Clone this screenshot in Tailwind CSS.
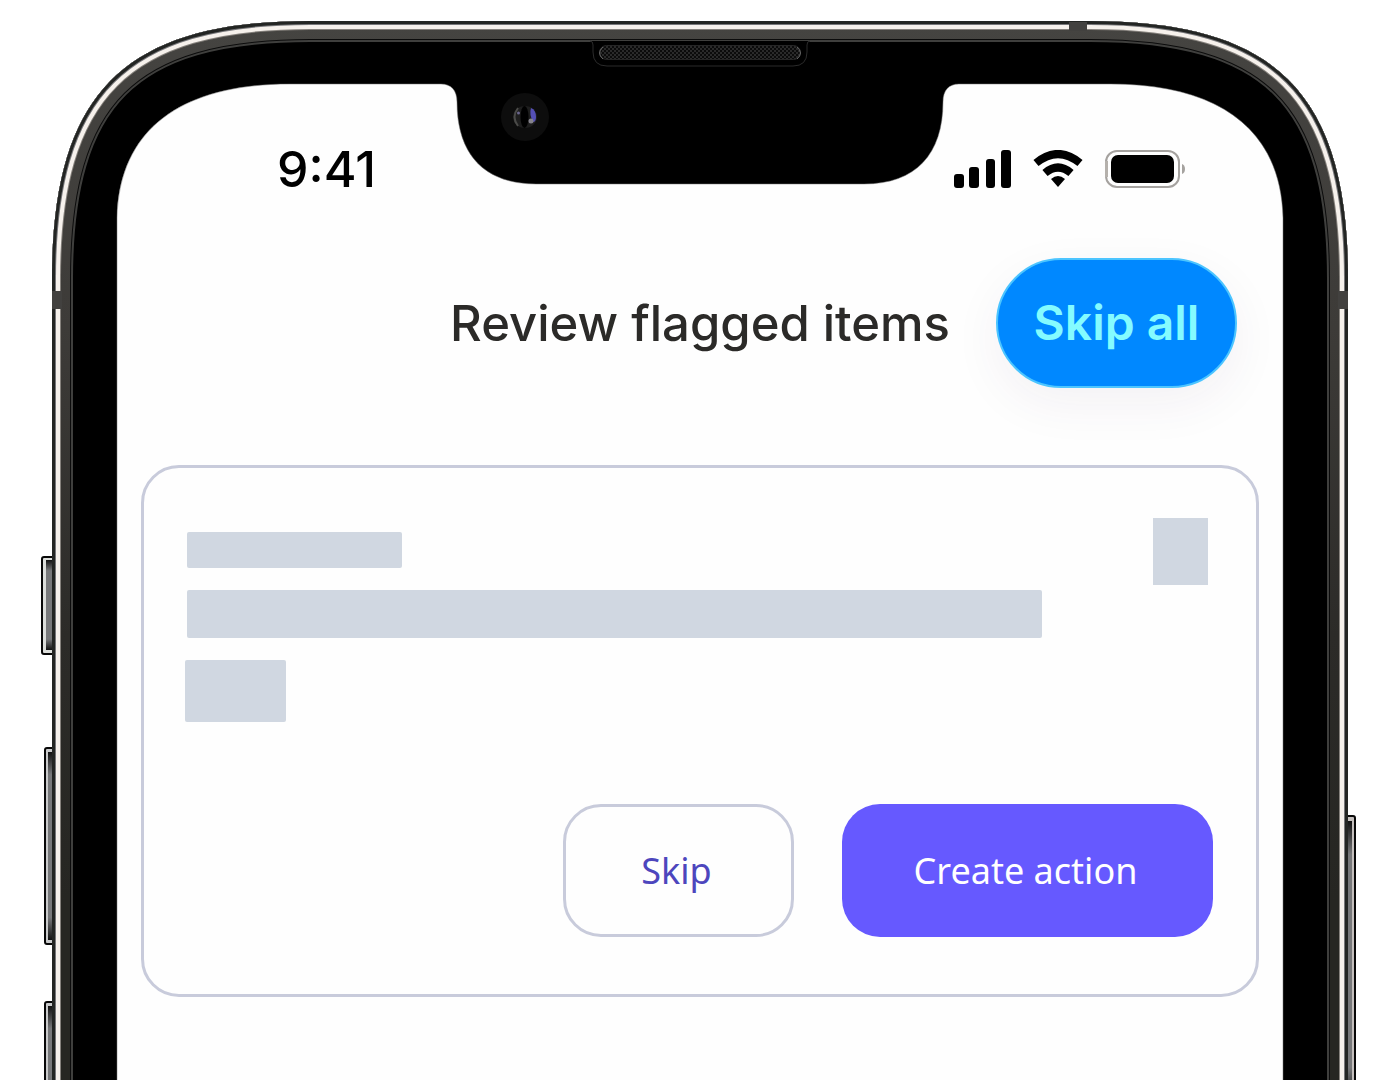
<!DOCTYPE html>
<html lang="en">
<head>
    <meta charset="UTF-8">
    <meta name="viewport" content="width=device-width, initial-scale=1.0">
    <title>Review flagged items</title>
    <script src="https://cdn.jsdelivr.net/npm/@tailwindcss/browser@4"></script>
</head>
<body class="bg-white font-['Inter',sans-serif]">
    <div class="relative mx-auto min-h-screen w-full max-w-[1400px] overflow-hidden">
        <!-- Phone frame -->
        <svg class="absolute inset-0 h-full w-full" viewBox="0 0 1400 1080" preserveAspectRatio="xMidYMin slice" fill="none" aria-hidden="true">
            <defs>
                <linearGradient id="band" gradientUnits="userSpaceOnUse" x1="0" y1="20" x2="0" y2="900">
                    <stop offset="0" stop-color="#454441"/>
                    <stop offset="0.35" stop-color="#3d3b38"/>
                    <stop offset="0.7" stop-color="#2c2b28"/>
                    <stop offset="1" stop-color="#262622"/>
                </linearGradient>
                <linearGradient id="key" x1="0" y1="0" x2="0" y2="1">
                    <stop offset="0" stop-color="#111"/>
                    <stop offset="0.12" stop-color="#77787a"/>
                    <stop offset="0.88" stop-color="#77787a"/>
                    <stop offset="1" stop-color="#111"/>
                </linearGradient>
                <pattern id="mesh" width="4" height="4" patternUnits="userSpaceOnUse">
                    <rect width="4" height="4" fill="#0b0b0b"/>
                    <rect width="2" height="2" fill="#2a2a2a"/>
                    <rect x="2" y="2" width="2" height="2" fill="#2a2a2a"/>
                </pattern>
                <path id="shell" d="M52 1140V279C52 93 124 21 310 21H1090C1276 21 1348 93 1348 279V1140Z"/>
                <clipPath id="inside"><use href="#shell"/></clipPath>
            </defs>

            <!-- Side keys -->
            <g stroke="#080808" stroke-width="2">
                <rect x="42" y="557" width="20" height="97" rx="2" fill="#dcdedb"/>
                <rect x="45" y="748" width="20" height="196" rx="2" fill="#c9cacb"/>
                <rect x="45" y="1002" width="20" height="196" rx="2" fill="#c9cacb"/>
                <rect x="1330" y="816" width="25" height="300" rx="2" fill="#c4bfbd"/>
            </g>
            <rect x="46" y="560" width="10" height="90" fill="url(#key)"/>
            <rect x="48" y="752" width="8" height="188" fill="url(#key)"/>
            <rect x="48" y="1006" width="8" height="188" fill="url(#key)"/>
            <rect x="1344" y="821" width="8" height="280" fill="url(#key)"/>

            <!-- Metal rim, widest stroke first -->
            <use href="#shell" fill="#000"/>
            <g clip-path="url(#inside)">
                <use href="#shell" stroke="#3f3f3d" stroke-width="42"/>
                <use href="#shell" stroke="#0b0b0b" stroke-width="38"/>
                <use href="#shell" stroke="url(#band)" stroke-width="36"/>
                <use href="#shell" stroke="#85817c" stroke-width="18"/>
                <use href="#shell" stroke="#f6f1ec" stroke-width="16"/>
                <use href="#shell" stroke="#77777a" stroke-width="8"/>
                <use href="#shell" stroke="#232523" stroke-width="6"/>
                <g fill="#42413f">
                    <rect x="1069" y="22" width="18" height="9"/>
                    <rect x="52" y="291" width="10" height="18"/>
                    <rect x="1338" y="291" width="10" height="18"/>
                </g>
            </g>

            <!-- Display -->
            <path fill="#fefefe" stroke="#777" stroke-width="0.5" d="M117 1140V218C119 130 180 84 290 84H441C451 84 457 90 457 102C457 154 484 184 536 184H864C916 184 943 154 943 102C943 90 949 84 959 84H1110C1220 84 1281 130 1283 218V1140Z"/>

            <!-- Earpiece -->
            <path fill="#000" stroke="#2b2b2b" d="M590 41Q593 41 593 45V52Q593 66 607 66H793Q807 66 807 52V45Q807 41 810 41"/>
            <rect x="599.5" y="45.500" width="201" height="14" rx="7" fill="url(#mesh)" stroke="#262626"/>
            <path d="M603 47Q596 53 603 59M797 47Q804 53 797 59" stroke="#666"/>

            <!-- Camera -->
            <circle cx="525" cy="117" r="24" fill="#0d0d0d"/>
            <ellipse cx="525" cy="117" rx="12" ry="11" fill="#1e1e1e"/>
            <path d="M518 108Q511 117 518 126" stroke="#4a4a48" stroke-width="2"/>
            <path d="M531 108Q536 110 536 117Q536 122 533 122Q529 114 531 108Z" fill="#544fb5"/>
            <ellipse cx="524.500" cy="117" rx="4" ry="11" fill="#000"/>
            <circle cx="518.500" cy="113" r="1.500" fill="#69658c"/>
            <circle cx="531" cy="121" r="2.500" fill="#85838c"/>
        </svg>

        <div class="relative px-[117px] pt-[84px]">
            <!-- Status bar -->
            <div class="flex h-[170px] items-center justify-between pr-[97px] pl-[160px] text-black">
                <span class="text-[50px] leading-none font-medium">9:41</span>
                <div class="flex items-center gap-[22px]">
                    <svg class="h-[38px] w-[58px]" viewBox="0 0 58 38" fill="currentColor" aria-hidden="true">
                        <rect x="1" y="24" width="10" height="14" rx="3"/>
                        <rect x="16" y="17" width="10" height="21" rx="3"/>
                        <rect x="33" y="9" width="9" height="29" rx="3"/>
                        <rect x="48" y="0" width="10" height="38" rx="3"/>
                    </svg>
                    <svg class="h-[38px] w-[50px]" viewBox="0 0 50 38" fill="none" stroke="currentColor" stroke-width="8" aria-hidden="true">
                        <path d="M3 13Q25 -5 47 13"/>
                        <path d="M12 23Q25 12 38 23"/>
                        <path d="M18 29Q25 23 32 29L25 37Z" fill="currentColor" stroke="none"/>
                    </svg>
                    <svg class="h-[38px] w-[81px]" viewBox="0 0 81 38" fill="none" aria-hidden="true">
                        <rect x="1" y="1" width="73" height="36" rx="11" stroke="#a5a29f" stroke-width="2"/>
                        <path d="M1.500 11V27" stroke="#b5b1ac" stroke-width="3"/>
                        <rect x="6" y="5" width="63" height="28" rx="7" fill="#000"/>
                        <path d="M77 14Q80 15 80 19T77 24Z" fill="#a5a29f"/>
                    </svg>
                </div>
            </div>

            <!-- Header -->
            <header class="flex h-[138px] items-center justify-end gap-[46px] pr-[46px]">
                <h1 class="text-[49px] leading-none font-medium text-[#2b2a28]">Review flagged items</h1>
                <button type="button" class="h-[130px] w-[241px] rounded-full border-2 border-[#4cc5ff] bg-[#0088ff] text-[48px] leading-none font-semibold text-[#84fbff] shadow-[0_16px_50px_rgba(70,30,90,0.06)]">Skip all</button>
            </header>

            <!-- Flagged item card -->
            <section class="mx-6 mt-[73px] rounded-[38px] border-3 border-[#c8cbdb] px-[41px] pt-[50px] pb-[57px]">
                <div class="flex justify-between">
                    <div class="grow pt-[14px]">
                        <div class="ml-0.5 h-9 w-[215px] rounded-xs bg-[#d0d7e1]"></div>
                        <div class="mt-[22px] ml-0.5 h-12 w-full max-w-[855px] rounded-xs bg-[#d0d7e1]"></div>
                        <div class="mt-[22px] h-[62px] w-[101px] rounded-xs bg-[#d0d7e1]"></div>
                    </div>
                    <div class="mr-[7px] h-[67px] w-[55px] bg-[#d0d7e1]"></div>
                </div>
                <div class="mt-[82px] flex justify-end gap-12 pr-0.5 font-['Noto_Sans',sans-serif] text-[36px] leading-none">
                    <button type="button" class="h-[133px] w-[231px] rounded-[38px] border-3 border-[#c8cbdb] pr-1 text-[#4d46bd]">Skip</button>
                    <button type="button" class="h-[133px] w-[371px] rounded-[38px] bg-[#6659ff] pr-1 text-white">Create action</button>
                </div>
            </section>
        </div>
    </div>
</body>
</html>
